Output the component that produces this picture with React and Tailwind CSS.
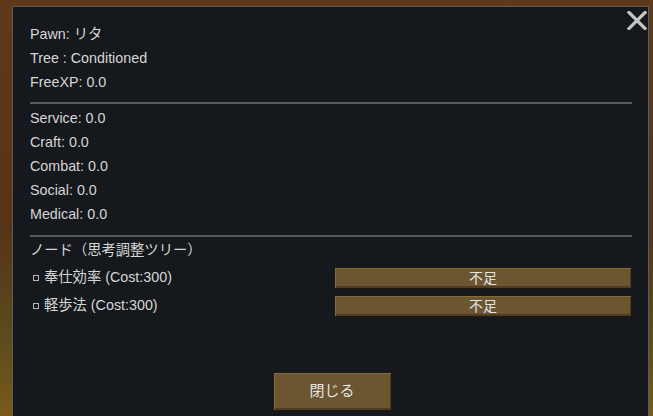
import React from 'react';

const font = { fontFamily: '"Liberation Sans", Arial, "Noto Sans CJK JP", sans-serif' };

const GameButton = ({ children, className = '' }) => (
  <button
    className={`bg-[#6c5631] border border-[#1f1a11] shadow-[inset_1px_1px_0_#82693f,inset_-1px_-2px_0_#4e3d22] text-[#e4e4e4] flex items-center justify-center ${className}`}
  >
    {children}
  </button>
);

const NodeRow = ({ label }) => (
  <div className="flex items-center h-[22px]">
    <div className="flex-1 flex items-center">
      <span className="w-[6px] h-[6px] border border-[#b8b8b8] ml-[3px] mr-[5px]" />
      <span>{label}</span>
    </div>
    <GameButton className="w-[298px] h-[22px] text-[14px]">不足</GameButton>
  </div>
);

export default function App() {
  const top = ['Pawn: リタ', 'Tree : Conditioned', 'FreeXP: 0.0'];
  const stats = ['Service: 0.0', 'Craft: 0.0', 'Combat: 0.0', 'Social: 0.0', 'Medical: 0.0'];

  return (
    <div
      className="w-[653px] h-[416px] overflow-hidden bg-[linear-gradient(180deg,#5e3a1a_0%,#573417_55%,#5a4a1e_80%,#7a5a1c_100%)] pt-[6px] pl-[12px] pr-[4px]"
      style={font}
    >
      <div className="relative h-[410px] bg-[#15181d] border-t border-l border-r border-[#5c5c5c] pt-[16px] pl-[17px] pr-[16px] text-[14.3px] text-[#d6d6d6]">
        <svg className="absolute right-[1px] top-[4px]" width="20" height="19" viewBox="0 0 20 19">
          <path d="M2 1.5 L18 17.5 M18 1.5 L2 17.5" stroke="#c4c4c4" strokeWidth="3.2" strokeLinecap="square" />
        </svg>

        {top.map((t) => (
          <div key={t} className="h-[24px] flex items-center">{t}</div>
        ))}
        <div className="mt-[7px] h-[2px] bg-[#55585c]" />
        <div className="mt-[3px]">
          {stats.map((t) => (
            <div key={t} className="h-[24px] flex items-center">{t}</div>
          ))}
        </div>
        <div className="mt-[8px] h-[2px] bg-[#55585c]" />
        <div className="mt-[2px] h-[24px] flex items-center">ノード（思考調整ツリー）</div>
        <div className="mt-[4px] flex flex-col gap-[6px]">
          <NodeRow label="奉仕効率 (Cost:300)" />
          <NodeRow label="軽歩法 (Cost:300)" />
        </div>
        <div className="mt-[55px] flex justify-center">
          <GameButton className="w-[119px] h-[39px] ml-[2px] text-[15px]">閉じる</GameButton>
        </div>
      </div>
    </div>
  );
}
